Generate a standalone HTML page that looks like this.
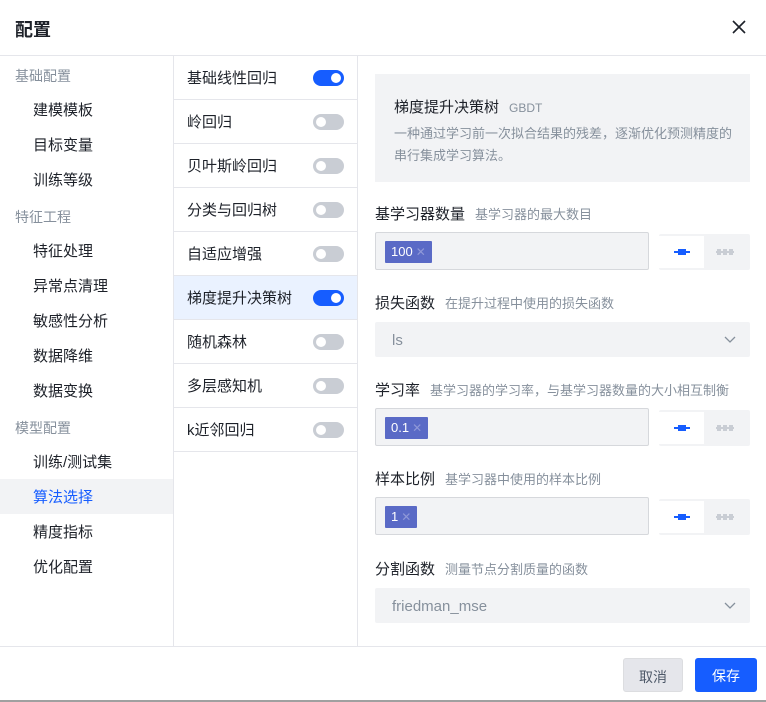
<!DOCTYPE html>
<html><head><meta charset="utf-8"><style>
*{box-sizing:border-box;margin:0;padding:0}
body{width:766px;height:702px;background:#fff;font-family:"Liberation Sans","Noto Sans CJK SC",sans-serif;position:relative;overflow:hidden;color:#1d2129}
.a{position:absolute}
.hdr{left:0;top:0;width:766px;height:56px;border-bottom:1px solid #e5e6eb}
.hdr .t{left:15px;top:16px;font-size:18px;font-weight:bold}
.nav{left:0;top:56px;width:174px;height:590px;border-right:1px solid #e5e6eb}
.sec{position:absolute;left:15px;font-size:14px;color:#86909c}
.it{position:absolute;left:0;width:173px;height:35px;line-height:35px;padding-left:33px;font-size:15px;color:#1d2129}
.mid{left:174px;top:56px;width:184px;height:590px;border-right:1px solid #e5e6eb}
.row{position:absolute;left:0;width:183px;height:44px;border-bottom:1px solid #e5e6eb;font-size:15px;line-height:46px;padding-left:13px}
.sw{position:absolute;left:139px;top:14px;width:31px;height:16px;border-radius:8px;background:#c9cdd4}
.sw::after{content:"";position:absolute;left:3px;top:3px;width:10px;height:10px;border-radius:50%;background:#fff}
.sw.on{background:#165dff}.sw.on::after{left:18px}
.info{left:375px;top:74px;width:375px;height:108px;background:#f2f3f5}
.lbl{position:absolute;left:375px;font-size:15px;color:#1d2129}
.lbl span{font-size:13px;color:#86909c;margin-left:10px}
.inp{position:absolute;left:375px;width:274px;height:38px;background:#f2f3f5;border:1px solid #d6d8dc;border-radius:2px}
.tag{position:absolute;left:9px;top:8px;height:22px;line-height:22px;background:#5a6ac6;color:#fff;font-size:13px;padding:0 6px;border-radius:1px}
.tag i{font-style:normal;color:#8f98d8;margin-left:3px;font-size:12px}
.grp{position:absolute;left:659px;width:91px;height:36px;background:#f2f3f5;border-radius:2px}
.grp .w{position:absolute;left:0;top:2px;width:45px;height:32px;background:#fff}
.sel{position:absolute;left:375px;width:375px;height:35px;background:#f2f3f5;border-radius:2px;font-size:15px;color:#86909c;line-height:37px;padding-left:17px}
.btn{position:absolute;top:658px;height:34px;line-height:36px;text-align:center;font-size:14px;border-radius:3px}
</style></head><body>
<div class="a hdr"><div class="a t">配置</div>
<svg class="a" style="left:732px;top:20px" width="14" height="14" viewBox="0 0 14 14"><path d="M1 1L13 13M13 1L1 13" stroke="#1d2129" stroke-width="1.6"/></svg></div>
<div class="a nav">
<div class="sec" style="top:10px">基础配置</div>
<div class="it" style="top:37px">建模模板</div>
<div class="it" style="top:72px">目标变量</div>
<div class="it" style="top:107px">训练等级</div>
<div class="sec" style="top:151px">特征工程</div>
<div class="it" style="top:178px">特征处理</div>
<div class="it" style="top:213px">异常点清理</div>
<div class="it" style="top:248px">敏感性分析</div>
<div class="it" style="top:283px">数据降维</div>
<div class="it" style="top:318px">数据变换</div>
<div class="sec" style="top:362px">模型配置</div>
<div class="it" style="top:389px">训练/测试集</div>
<div class="it" style="top:423px;background:#f2f3f5;color:#165dff;line-height:37px">算法选择</div>
<div class="it" style="top:459px">精度指标</div>
<div class="it" style="top:494px">优化配置</div>
</div>
<div class="a mid">
<div class="row" style="top:0">基础线性回归<div class="sw on"></div></div>
<div class="row" style="top:44px">岭回归<div class="sw"></div></div>
<div class="row" style="top:88px">贝叶斯岭回归<div class="sw"></div></div>
<div class="row" style="top:132px">分类与回归树<div class="sw"></div></div>
<div class="row" style="top:176px">自适应增强<div class="sw"></div></div>
<div class="row" style="top:220px;background:#eaf2ff">梯度提升决策树<div class="sw on"></div></div>
<div class="row" style="top:264px">随机森林<div class="sw"></div></div>
<div class="row" style="top:308px">多层感知机<div class="sw"></div></div>
<div class="row" style="top:352px">k近邻回归<div class="sw"></div></div>
</div>
<div class="a info">
<div class="a" style="left:19px;top:22px;font-size:15px">梯度提升决策树<span style="font-size:12px;color:#86909c;margin-left:10px">GBDT</span></div>
<div class="a" style="left:19px;top:49px;width:340px;font-size:13px;color:#86909c;line-height:22px">一种通过学习前一次拟合结果的残差，逐渐优化预测精度的串行集成学习算法。</div>
</div>
<div class="lbl" style="top:203px">基学习器数量<span>基学习器的最大数目</span></div>
<div class="inp" style="top:232px"><div class="tag">100<i>✕</i></div></div>
<div class="grp" style="top:234px"><div class="w"></div>
<svg class="a" style="left:15px;top:14px" width="16" height="8"><rect x="0" y="3" width="16" height="2" fill="#165dff"/><rect x="4" y="1" width="8" height="6" fill="#165dff"/></svg>
<svg class="a" style="left:57px;top:14px" width="18" height="8"><rect x="0" y="3" width="18" height="2" fill="#c9cdd4"/><rect x="1" y="1" width="4" height="6" fill="#c9cdd4"/><rect x="7" y="1" width="4" height="6" fill="#c9cdd4"/><rect x="13" y="1" width="4" height="6" fill="#c9cdd4"/></svg></div>
<div class="lbl" style="top:292px">损失函数<span>在提升过程中使用的损失函数</span></div>
<div class="sel" style="top:322px">ls<svg class="a" style="left:349px;top:14px" width="12" height="8"><path d="M1 1L6 6L11 1" stroke="#86909c" fill="none" stroke-width="1.3"/></svg></div>
<div class="lbl" style="top:379px">学习率<span>基学习器的学习率，与基学习器数量的大小相互制衡</span></div>
<div class="inp" style="top:408px"><div class="tag">0.1<i>✕</i></div></div>
<div class="grp" style="top:410px"><div class="w"></div>
<svg class="a" style="left:15px;top:14px" width="16" height="8"><rect x="0" y="3" width="16" height="2" fill="#165dff"/><rect x="4" y="1" width="8" height="6" fill="#165dff"/></svg>
<svg class="a" style="left:57px;top:14px" width="18" height="8"><rect x="0" y="3" width="18" height="2" fill="#c9cdd4"/><rect x="1" y="1" width="4" height="6" fill="#c9cdd4"/><rect x="7" y="1" width="4" height="6" fill="#c9cdd4"/><rect x="13" y="1" width="4" height="6" fill="#c9cdd4"/></svg></div>
<div class="lbl" style="top:468px">样本比例<span>基学习器中使用的样本比例</span></div>
<div class="inp" style="top:497px"><div class="tag">1<i>✕</i></div></div>
<div class="grp" style="top:499px"><div class="w"></div>
<svg class="a" style="left:15px;top:14px" width="16" height="8"><rect x="0" y="3" width="16" height="2" fill="#165dff"/><rect x="4" y="1" width="8" height="6" fill="#165dff"/></svg>
<svg class="a" style="left:57px;top:14px" width="18" height="8"><rect x="0" y="3" width="18" height="2" fill="#c9cdd4"/><rect x="1" y="1" width="4" height="6" fill="#c9cdd4"/><rect x="7" y="1" width="4" height="6" fill="#c9cdd4"/><rect x="13" y="1" width="4" height="6" fill="#c9cdd4"/></svg></div>
<div class="lbl" style="top:558px">分割函数<span>测量节点分割质量的函数</span></div>
<div class="sel" style="top:588px">friedman_mse<svg class="a" style="left:349px;top:14px" width="12" height="8"><path d="M1 1L6 6L11 1" stroke="#86909c" fill="none" stroke-width="1.3"/></svg></div>
<div class="a" style="left:0;top:646px;width:766px;height:1px;background:#e5e6eb"></div>
<div class="btn" style="left:623px;width:60px;background:#e5e6eb;color:#4e5969;border:1px solid #dcdde0">取消</div>
<div class="btn" style="left:695px;width:62px;background:#165dff;color:#fff">保存</div>
<div class="a" style="left:0;top:700px;width:766px;height:2px;background:#a0a0a0"></div>
</body></html>
